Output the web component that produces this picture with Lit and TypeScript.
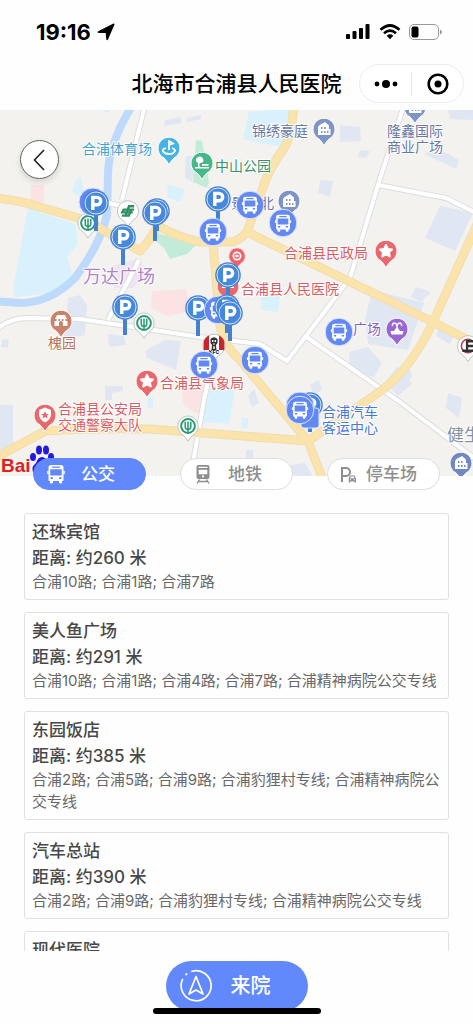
import { LitElement, html, svg, css } from "lit";
import { customElement, state } from "lit/decorators.js";

type Stop = { name: string; distance: number; lines: string };
type Point = [number, number];

const STOPS: Stop[] = [
  { name: "还珠宾馆", distance: 260, lines: "合浦10路; 合浦1路; 合浦7路" },
  { name: "美人鱼广场", distance: 291, lines: "合浦10路; 合浦1路; 合浦4路; 合浦7路; 合浦精神病院公交专线" },
  { name: "东园饭店", distance: 385, lines: "合浦2路; 合浦5路; 合浦9路; 合浦豹狸村专线; 合浦精神病院公交专线" },
  { name: "汽车总站", distance: 390, lines: "合浦2路; 合浦9路; 合浦豹狸村专线; 合浦精神病院公交专线" },
  { name: "现代医院", distance: 412, lines: "合浦1路; 合浦7路" },
];

const busGlyph = svg`
  <path fill="currentColor" fill-rule="evenodd" d="M-5 -9H5Q7.500 -9 7.500 -6.500V6Q7.500 7 6.500 7H6V8.500Q6 9.500 5 9.500H4Q3 9.500 3 8.500V7H-3V8.500Q-3 9.500 -4 9.500H-5Q-6 9.500 -6 8.500V7H-6.500Q-7.500 7 -7.500 6V-6.500Q-7.500 -9 -5 -9ZM-4 -7.600V-6.300H4V-7.600ZM-5.800 -4.800V1.600H5.800V-4.800ZM-5.500 3.300V5H-3V3.300ZM3 3.300V5H5.500V3.300Z"/>
  <path fill="currentColor" d="M-8.800 -3H-7.400V0H-8.800ZM7.400 -3H8.800V0H7.400Z"/>`;

const metroGlyph = svg`
  <path fill="currentColor" fill-rule="evenodd" d="M-4.500 -9H4.500Q6.500 -9 6.500 -7V3Q6.500 5 4.500 5H-4.500Q-6.500 5 -6.500 3V-7Q-6.500 -9 -4.500 -9ZM-4.500 -7.200V-6H4.500V-7.200ZM-4.300 -4.200V.2H4.300V-4.200ZM-1 1.500V3.200H1V1.500Z"/>
  <path stroke="currentColor" stroke-width="1.400" fill="none" d="M-3.500 5.500L-6 9.500M3.500 5.500L6 9.500M-4.500 7.500H4.500"/>`;

const parkingGlyph = svg`
  <path stroke="currentColor" stroke-width="2" fill="none" d="M-8 8V-6H-4A3.800 3.800 0 0 1 -4 2H-8"/>
  <path fill="currentColor" fill-rule="evenodd" d="M-.2 1.500H4.800L5.900 4.200V8.500H4.300V7.500H.3V8.500H-1.300V4.200ZM.6 2.600L0 4.200H4.600L4 2.600ZM-.2 5.300V6.300H1V5.300ZM3.600 5.300V6.300H4.800V5.300Z"/>`;

const busPin = ([x, y]: Point) => svg`
  <g class="bus-pin" transform="translate(${x} ${y})">
    <circle class="bus-disc" r="13.800"/>
    <g transform="scale(.92)">${busGlyph}</g>
  </g>`;

const parkPin = ([x, y, pole]: [number, number, number]) => svg`
  <g transform="translate(${x} ${y})">
    <path class="pole" d="M0 12V${pole}"/>
    <circle class="park-edge" r="12.800"/>
    <circle class="park-disc" r="11"/>
    <path class="park-letter" d="M-3.200 7V-5.600H1A3.600 3.600 0 0 1 1 1.800H-3"/>
  </g>`;

const SYMBOLS: Record<string, unknown> = {
  house: svg`<path fill="#fff" fill-rule="evenodd" d="M-6 6V-2L-4.500 -4L1 -7L5 -3.500V0H6.500V6ZM-3 -2V0H-1.500V-2ZM0 -2V0H1.500V-2ZM-3 2V4H-1.500V2ZM0 2V4H1.500V2ZM3 2V4H4.500V2Z"/>`,
  star: svg`<path fill="#fff" stroke="#fff" stroke-width="2" stroke-linejoin="round" d="M0 -6L1.800 -2L6 -1.600L2.900 1.300L3.800 5.500L0 3.300L-3.800 5.500L-2.900 1.300L-6 -1.600L-1.800 -2Z"/>`,
  shield: svg`<path fill="#fff" d="M0 -7.500L6 -5V0Q5.500 5 0 7.500Q-5.500 5 -6 0V-5Z"/><path fill="#e8686b" d="M0 -3.800L1.200 -1.200L4 -1L1.900 .8L2.500 3.500L0 2L-2.500 3.500L-1.900 .8L-4 -1L-1.200 -1.200Z"/>`,
  golf: svg`<path fill="none" stroke="#fff" stroke-width="1.800" d="M0 2V-7L4 -4.500L0 -3M-3 0Q-7 1 -6 3.500Q-4 6 0 6Q5 6 6 3Q6 1 3 0"/>`,
  tree: svg`<path fill="#fff" d="M-6 -3A3 3 0 0 1 -4 -6A3.500 3.500 0 0 1 1 -4A2.500 2.500 0 0 1 -1 0H-2.500V4H7V5.500H-7V4H-4V0A3 3 0 0 1 -6 -3ZM0 1H6.500V2.700H0Z"/>`,
  gate: svg`<path fill="#fff" fill-rule="evenodd" d="M-4 -6H4L6 -2H4.500V0H6.500V5H2V2A2 2 0 0 0 -2 2V5H-6.500V0H-4.500V-2H-6ZM-2.500 -2V0H-.8V-2ZM.8 -2V0H2.500V-2Z"/>`,
  fountain: svg`<path fill="#fff" d="M-5.500 5.500L-6.500 2H-3L-1 -1H1L3 2H6.500L5.500 5.500Z"/><path fill="none" stroke="#fff" stroke-width="1.500" d="M0 0V-3Q-1 -7 -4 -5.500Q-5 -4.500 -4.500 -3M0 -3Q1 -7 4 -5.500Q5 -4.500 4.500 -3"/>`,
  cross: svg`<path fill="#fff" d="M-2 -6H2V-2H6V2H2V6H-2V2H-6V-2H-2Z"/>`,
  ring: svg`<g transform="scale(1.200)"><circle r="4" fill="none" stroke="#fff" stroke-width="1.800"/><path stroke="#fff" stroke-width="1.500" d="M-2 0H2M0 -1.500V1.500"/></g>`,
  bank: svg`<circle r="7.500" fill="#fff" stroke="#2c9a73" stroke-width="2.200"/><path fill="none" stroke="#2c9a73" stroke-width="1.700" d="M0 -5V8M-3 -4.500V1Q-3 3.500 0 4M3 -4.500V1Q3 3.500 0 4"/>`,
  post: svg`<path fill="none" stroke="#2f8f62" stroke-width="2.400" d="M6.500 -5H1L-2.500 5M6.500 -1.500H-4.500L-6 1.500H5M-6.500 4.800H1L3 -1"/>`,
  kfc: svg`<path fill="#c8232e" d="M-10.300 -3Q-9.500 -7.500 -5 -9.500V5H-10.300ZM10.300 -3Q9.500 -7.500 5 -9.500V5H10.300Z"/><path fill="#333" fill-rule="evenodd" d="M-3.500 -6Q0 -9.500 3.500 -6V-2L2 0L2.500 5H-2.500L-2 0L-3.500 -2ZM-2 -5V-3H-.6V-5ZM.6 -5V-3H2V-5ZM-1 -1.500H1V-.5H-1ZM-1 1.500L-.6 4H.6L1 1.500Z"/>`,
  ebike: svg`<circle r="7" fill="none" stroke="#b53b44" stroke-width="1.600"/><path fill="none" stroke="#333" stroke-width="2.400" d="M6 -5H-1V5H6M-1 0H6M-6 5H0"/>`,
};

const POIS: [number, number, string, string, number][] = [
  [169, 148, "#45b4e4", "golf", 1], [202, 163, "#45b789", "tree", 1],
  [324, 129, "#7e94c4", "house", 1], [289, 201, "#7e94c4", "house", 1],
  [415, 107, "#7e94c4", "house", 1], [461, 463, "#7189c0", "house", 1],
  [386, 251, "#e8686b", "star", 1], [147, 381, "#e8686b", "star", 1],
  [45, 415, "#e8686b", "shield", 1], [61, 321, "#c9836b", "gate", 1],
  [397, 329, "#9966d4", "fountain", 1], [228, 286, "#e8686b", "cross", 1],
  [237, 256, "#ee6468", "ring", .76],
  [88, 223, "#fff", "bank", .92], [128, 211, "#fff", "post", .95],
  [144, 323, "#fff", "bank", .92], [188, 426, "#fff", "bank", .92],
  [214, 345, "#fff", "kfc", 1], [468, 346, "#fff", "ebike", .95],
];

const poi = ([x, y, fill, kind, scale]: [number, number, string, string, number]) => svg`
  <g transform="translate(${x} ${y}) scale(${scale})">
    <path class=${fill === "#fff" ? "poi pale" : "poi"} fill=${fill} d="M0 16.500Q-2 13 -5 10A11 11 0 1 1 5 10Q2 13 0 16.500Z"/>
    ${SYMBOLS[kind]}
  </g>`;

const LABELS: [number, number, string, string][] = [
  [82, 154, "合浦体育场", "sky"], [215, 171, "中山公园", "green"],
  [252, 136, "锦绣豪庭", "slate"], [387, 136, "隆鑫国际", "slate"], [387, 152, "商业广场", "slate"],
  [231, 208, "景", "slate"], [260, 208, "北", "slate"],
  [284, 258, "合浦县民政局", "red"], [241, 294, "合浦县人民医院", "red"],
  [48, 348, "槐园", "brown"], [353, 334, "广场", "violet"],
  [160, 388, "合浦县气象局", "red"], [58, 414, "合浦县公安局", "red"], [58, 430, "交通警察大队", "red"],
  [322, 417, "合浦汽车", "azure"], [322, 433, "客运中心", "azure"],
  [83, 283, "万达广场", "plaza"], [447, 441, "健生", "grey"],
];

const ROADS = [
  "M-5 198Q20 200 40 207L85 220L140 251Q150 240 158 226Q180 238 200 242H232Q240 240 247 232L262 190Q268 170 286 145Q292 130 294 105",
  "M247 232L433 322L478 345", "M213 243L220 325Q223 345 240 360L308 441L323 480",
  "M478 222L433 322Q410 372 375 395L308 441", "M-5 458L45 431Q90 428 150 429L190 432L308 441",
];

const STREETS = [
  "M145 105L122 200M108 203L122 206", "M139 260L108 320", "M-5 331Q8 319 25 318L80 319L200 337L260 344L287 361L350 278L378 185L404 105",
  "M378 185L446 198L478 214", "M305 336L400 402L478 461", "M215 350L204 400L190 480",
];

const BLOCKS: [string, string][] = [
  ["water", "M28 208L75 224L78 244L67 257L73 277L53 293L15 297L13 288Z"], ["water", "M249 112L291 108L281 147L243 139Z"],
  ["water", "M76 180L81 177L84 192L77 196L72 191Z"], ["water", "M96 108H112L108 113Z"], ["water", "M261 292L280 294L278 312L261 310Z"],
  ["water", "M210 388H235L229 424L202 422Z"], ["water", "M168 184L185 190L180 202L167 197Z"], ["water", "M242 418H248V428H241Z"], ["water", "M148 397H153V408H147Z"],
  ["park", "M196 140L202 141L209 182L207 188L193 182Z"], ["park", "M157 233L197 244L187 254L170 259L164 248L155 240Z"],
  ["rose", "M31 185L44 185V202H30Z"], ["rose", "M152 291L186 289L191 311L167 316L151 308Z"], ["rose", "M181 390L208 382L198 414L184 406Z"],
  ["plot", "M113 266L140 258L145 275L133 288H114Z"],
  ["block", "M68 298L80 295L87 305L85 335L65 340L60 318L67 316Z"], ["block", "M186 156H196L192 182L185 178Z"], ["block", "M340 125L360 127L361 141L340 142Z"],
  ["block", "M440 206L473 213L455 251L425 238Z"], ["block", "M372 290L424 303L408 350L368 344L365 320Z"], ["block", "M145 351L165 340L181 341L176 370L147 358Z"],
  ["block", "M0 405H13V450H0Z"], ["block", "M105 386H123V391L112 393V400H105Z"], ["block", "M398 366L412 384L398 396L385 382Z"], ["block", "M320 180L333 181L330 197L318 193Z"],
  ["block", "M349 352L368 347L382 363L374 377L350 372Z"], ["block", "M448 393L462 398L459 418L446 408Z"], ["block", "M437 148L459 160L456 169L424 154Z"], ["block", "M390 378L408 364L412 376L402 389Z"],
  ["block", "M165 120L181 117L181 123L164 126ZM187 118L201 115V119L187 122Z"], ["block", "M416 287L431 292L421 302L411 297ZM439 327L455 334L450 344L436 336Z"],
  ["block", "M248 396L254 389L259 403L252 407ZM246 450H253V465H245ZM310 385L319 380L322 390L314 395Z"], ["block", "M276 467L305 463L314 478H278Z"],
  ["block", "M448 110H473V120L450 119ZM360 150L370 151L366 158L357 157Z"], ["block", "M108 334L124 336L126 345L109 347ZM2 340L9 339L8 348L1 347Z"],
];

@customElement("app-root")
export class AppRoot extends LitElement {
  @state() private active = 0;

  static styles = css`
    :host { display: flex; flex-direction: column; height: 100vh; background: #fefefe; color: #484848;
      font-family: Inter, "Noto Sans CJK SC", sans-serif; overflow: hidden; }
    * { box-sizing: border-box; }
    button { font: inherit; color: inherit; margin: 0; padding: 0; border: 0; background: none; cursor: pointer; }
    svg { display: block; flex: none; }
    .status { display: flex; align-items: center; justify-content: space-between; height: 64px; padding: 0 31px 0 36px; color: #000; }
    .clock { display: flex; align-items: center; gap: 6px; font-size: 22px; font-weight: 700; line-height: 24px; }
    .signals { display: flex; align-items: center; gap: 8px; }
    .titlebar { display: grid; grid-template-columns: 1fr auto 1fr; align-items: center; height: 46px; padding: 0 9px 7px; color: #000; }
    .title { grid-column: 2; margin: 0; font-size: 21px; line-height: 30px; font-weight: 500; }
    .capsule { justify-self: end; display: flex; align-items: center; width: 105px; height: 39px; border: 1px solid #ececec; border-radius: 20px; background: #fff; }
    .capsule button { flex: 1; display: flex; justify-content: center; }
    .capsule button + button { border-left: 1px solid #e4e4e4; height: 24px; align-items: center; }
    .map { position: relative; }
    .canvas { width: 100%; height: auto; max-height: 60vh; }
    .back { position: absolute; left: 20px; top: 30px; width: 39px; height: 39px; border: 1px solid #666; border-radius: 50%; background: #fff;
      display: flex; align-items: center; justify-content: center; box-shadow: 0 3px 6px #0002; color: #222; }
    .land { fill: #f3f2ef; }
    .water { fill: #d9f1fc; } .park { fill: #c3ecd8; } .rose { fill: #fbe3e4; } .plot { fill: #efe4f3; } .block { fill: #e0e7f3; }
    .river { fill: none; stroke: #bddafc; stroke-width: 8; }
    .road-edge { fill: none; stroke: #f1dcae; stroke-width: 9; stroke-linejoin: round; }
    .road { fill: none; stroke: #fbe4ac; stroke-width: 7; stroke-linejoin: round; }
    .street-edge { fill: none; stroke: #dcdde0; stroke-width: 6; }
    .street { fill: none; stroke: #fff; stroke-width: 4; }
    .poi { stroke: #fff; stroke-width: 1; }
    .pale { stroke: #b9c0c0; }
    .bus-pin { color: #fff; }
    .bus-disc { fill: #6288f3; stroke: #dbe6fc; stroke-width: 1; }
    .pole { stroke: #4482ce; stroke-width: 4; fill: none; }
    .park-edge { fill: #4a83d6; }
    .park-disc { fill: #4688dc; stroke: #d3e6fb; stroke-width: 1; }
    .park-letter { fill: none; stroke: #fff; stroke-width: 3.4; }
    .label { font-size: 14px; paint-order: stroke; stroke: #fff; stroke-width: 2; stroke-linejoin: round; }
    .sky { fill: #3fa3d0; } .green { fill: #35916a; } .slate { fill: #6678a5; } .red { fill: #da5b62; }
    .brown { fill: #bb6f58; } .violet { fill: #8a5cc4; } .azure { fill: #4779d8; }
    .plaza { fill: #ae82c9; font-size: 18px; } .grey { fill: #8790a0; font-size: 17px; }
    .kfc-name { fill: #222; font-size: 5px; font-weight: 800; text-anchor: middle; }
    .brand { fill: #e01f1f; font-family: "Liberation Sans", sans-serif; font-size: 19px; font-weight: 700; }
    .paw { fill: #2319dc; }
    .tabs { position: relative; display: flex; justify-content: space-between; padding: 0 33px; margin-top: -18px; }
    .tab { display: flex; align-items: center; width: 113px; height: 32px; padding-left: 12px; gap: 15px; border: 1px solid #dedede;
      border-radius: 16px; background: #fff; color: #8e8e8e; font-size: 17px; line-height: 24px; font-weight: 500; }
    .tab.tight { gap: 6px; }
    .tab.on { background: #6289fb; border-color: #6289fb; color: #fff; }
    .stops { flex: 1; min-height: 0; margin: 23px 0 0; padding: 0 24px; list-style: none; display: flex; flex-direction: column; gap: 12px;
      overflow-y: auto; scrollbar-width: none; }
    .stop { flex: none; padding: 5px 7px 6px; border: 1px solid #e0e0e0; border-radius: 3px; }
    .name, .distance { margin: 0; font-size: 17px; line-height: 26px; font-weight: 500; }
    .lines { margin: 0; font-size: 15px; line-height: 22px; color: #686868; }
    .footer { position: relative; display: flex; justify-content: center; padding: 10px 0 13px; }
    .go { display: flex; align-items: center; gap: 18px; width: 142px; height: 50px; padding-left: 13px; border-radius: 25px;
      background: #6289fb; color: #fff; font-size: 20px; line-height: 28px; font-weight: 500; }
    .home { position: absolute; left: 50%; bottom: 10px; width: 168px; height: 6px; margin-left: -84px; border-radius: 3px; background: #000; }
  `;

  private tabs = [
    { label: "公交", glyph: busGlyph, gap: "" },
    { label: "地铁", glyph: metroGlyph, gap: "" },
    { label: "停车场", glyph: parkingGlyph, gap: "tight" },
  ];

  private renderMap() {
    return html`<svg class="canvas" viewBox="0 110 473 366" preserveAspectRatio="xMidYMid slice" role="img" aria-label="地图">
      <rect class="land" y="110" width="473" height="366" />
      ${BLOCKS.map(([c, d]) => svg`<path class=${c} d=${d}/>`)}
      <path class="river" d="M132 106Q108 145 108 175L107 215Q100 245 75 278Q50 303 20 303L-5 301" />
      ${STREETS.map((d) => svg`<path class="street-edge" d=${d}/>`)}
      ${STREETS.map((d) => svg`<path class="street" d=${d}/>`)}
      ${ROADS.map((d) => svg`<path class="road-edge" d=${d}/>`)}
      ${ROADS.map((d) => svg`<path class="road" d=${d}/>`)}
      ${LABELS.map(([x, y, text, c]) => svg`<text class="label ${c}" x=${x} y=${y}>${text}</text>`)}
      ${POIS.map(poi)}
      <text class="kfc-name" x="214" y="354">KFC</text>
      <circle class="bus-disc" cx="93" cy="202" r="14" />
      ${([[96, 203, 28], [123, 237, 28], [157, 211, 20], [155, 213, 28], [218, 199, 28], [228, 275, 30], [125, 307, 28], [198, 308, 28]] as [number, number, number][]).map(parkPin)}
      ${busPin([218, 310])}
      ${([[227, 307, 26], [230, 313, 28]] as [number, number, number][]).map(parkPin)}
      ${([[250, 205], [213, 232], [283, 223], [204, 365], [255, 360], [339, 332]] as Point[]).map(busPin)}
      ${parkPin([310, 405, 27])}
      <rect class="bus-disc" x="301" y="408" width="18" height="20" rx="3" />
      <circle class="bus-disc" cx="300" cy="406" r="14" />
      ${busPin([300, 410])}
      <text class="brand" x="1" y="472">Bai</text>
      <g class="paw">
        <ellipse cx="33" cy="457" rx="3" ry="4" /><ellipse cx="39" cy="450" rx="3" ry="4.500" />
        <ellipse cx="46" cy="450" rx="3" ry="4.500" /><ellipse cx="51" cy="457" rx="3" ry="4" />
        <path d="M42 457Q46 457 48 463Q53 468 50 473H34Q30 468 36 463Q38 457 42 457Z" />
      </g>
    </svg>`;
  }

  render() {
    return html`
      <div class="status">
        <div class="clock"><span>19:16</span>
          <svg width="18" height="18" viewBox="0 0 18 18"><path d="M16.500 .5Q17.800 .3 17.400 1.700L11 16.500Q10 18 9.300 16.300L8.700 10H2Q-.3 9.600 1.200 8.300Z"/></svg>
        </div>
        <div class="signals">
          <svg width="26" height="16" viewBox="0 0 26 16"><rect x="1" y="10" width="4" height="5" rx="1"/><rect x="7.500" y="7" width="4" height="8" rx="1"/><rect x="14" y="4" width="4" height="11" rx="1"/><rect x="20.500" y="0" width="4" height="15" rx="1"/></svg>
          <svg width="22" height="16" viewBox="0 0 22 16"><path d="M1.500 5.800Q11 -2.800 20.500 5.800M5 9.300Q11 4 17 9.300" fill="none" stroke="#000" stroke-width="2.700"/><path d="M7.700 11.700Q11 9 14.300 11.700L11 15.200Z"/></svg>
          <svg width="33" height="16" viewBox="0 0 33 16"><rect x=".5" y=".5" width="29" height="15" rx="4.500" fill="none" stroke="#999"/><rect x="2.500" y="2.500" width="7" height="11" rx="2"/><path d="M31 5.500Q33 6.500 33 8T31 10.500Z" fill="#999"/></svg>
        </div>
      </div>
      <header class="titlebar">
        <h1 class="title">北海市合浦县人民医院</h1>
        <div class="capsule">
          <button aria-label="更多"><svg width="24" height="10" viewBox="0 0 24 10"><circle cx="3" cy="5" r="2.400"/><circle cx="12" cy="5" r="4"/><circle cx="21" cy="5" r="2.400"/></svg></button>
          <button aria-label="关闭"><svg width="22" height="22" viewBox="0 0 22 22"><circle cx="11" cy="11" r="9.300" fill="none" stroke="#000" stroke-width="2.600"/><circle cx="11" cy="11" r="3.500"/></svg></button>
        </div>
      </header>
      <div class="map">
        ${this.renderMap()}
        <button class="back" aria-label="返回"><svg width="14" height="22" viewBox="0 0 14 22"><path d="M11 1L1.500 11L11 21" fill="none" stroke="currentColor" stroke-width="1.600"/></svg></button>
      </div>
      <div class="tabs" role="tablist">
        ${this.tabs.map((t, i) => html`<button role="tab" aria-selected=${i === this.active} class="tab ${t.gap} ${i === this.active ? "on" : ""}" @click=${() => (this.active = i)}>
          <svg width="20" height="20" viewBox="-10 -10 20 20">${t.glyph}</svg><span>${t.label}</span></button>`)}
      </div>
      <ul class="stops">
        ${STOPS.map((s) => html`<li class="stop"><h2 class="name">${s.name}</h2><p class="distance">距离: 约${s.distance} 米</p><p class="lines">${s.lines}</p></li>`)}
      </ul>
      <footer class="footer">
        <button class="go"><svg width="34" height="34" viewBox="0 0 34 34" fill="none" stroke="currentColor" stroke-width="1.700" stroke-linecap="round" stroke-linejoin="round">
          <path d="M13 2.300A15 15 0 1 1 3.500 10.500M7 5.500L7.600 5M17 7.500L24 25L17 21L10 25Z"/></svg><span>来院</span></button>
        <div class="home"></div>
      </footer>`;
  }
}
